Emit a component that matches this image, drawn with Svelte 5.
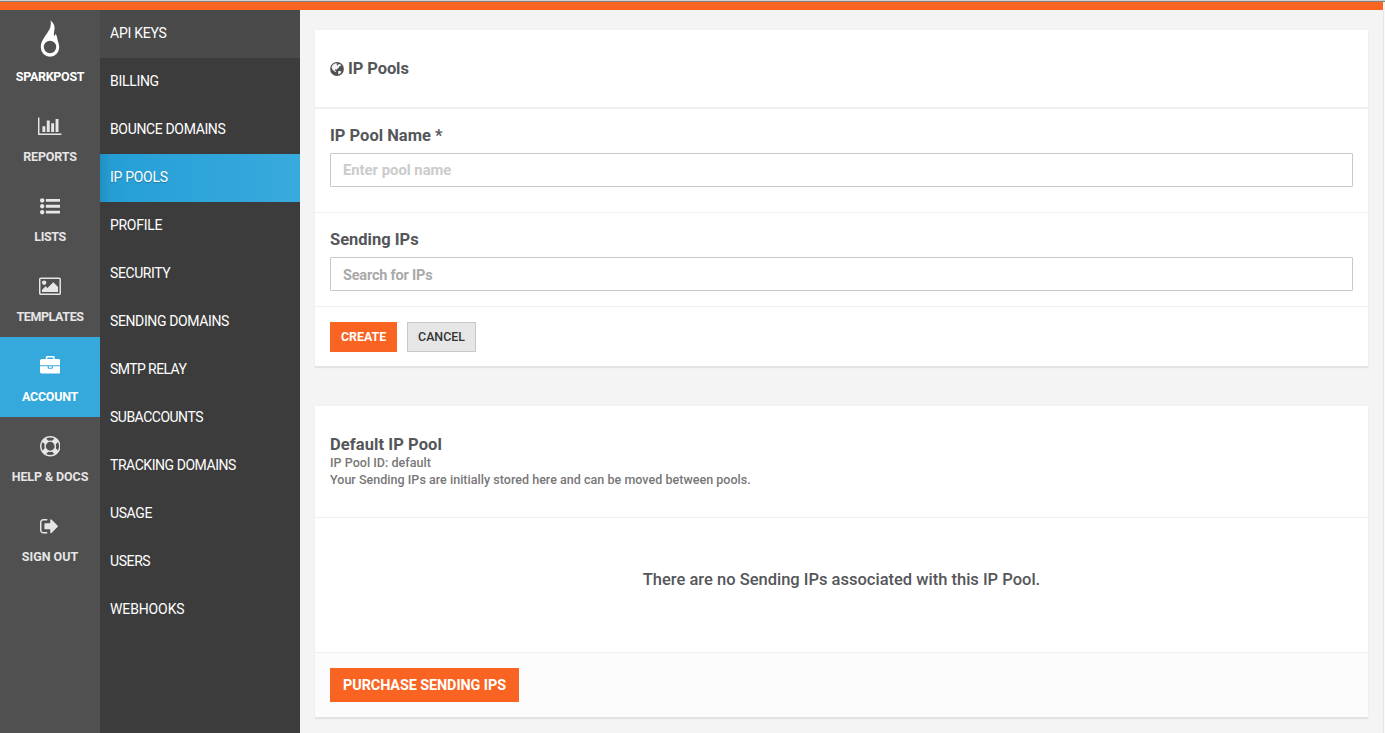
<script>
  const main = [
    { label: 'SPARKPOST', icon: 'flame', ls: -0.3 },
    { label: 'REPORTS', icon: 'chart', ls: -0.15 },
    { label: 'LISTS', icon: 'list', ls: -0.4 },
    { label: 'TEMPLATES', icon: 'image', ls: -0.4 },
    { label: 'ACCOUNT', icon: 'briefcase', ls: -0.25, active: true },
    { label: 'HELP & DOCS', icon: 'ring', ls: -0.1 },
    { label: 'SIGN OUT', icon: 'signout', ls: 0 }
  ];

  const sub = [
    { label: 'API KEYS', ls: -0.25, state: 'hover' },
    { label: 'BILLING', ls: -0.3 },
    { label: 'BOUNCE DOMAINS', ls: -0.35 },
    { label: 'IP POOLS', ls: -0.3, state: 'active' },
    { label: 'PROFILE', ls: -0.3 },
    { label: 'SECURITY', ls: -0.4 },
    { label: 'SENDING DOMAINS', ls: -0.38 },
    { label: 'SMTP RELAY', ls: -0.58 },
    { label: 'SUBACCOUNTS', ls: -0.5 },
    { label: 'TRACKING DOMAINS', ls: -0.45 },
    { label: 'USAGE', ls: -0.4 },
    { label: 'USERS', ls: -0.4 },
    { label: 'WEBHOOKS', ls: -0.12 }
  ];

  const icons = {
    chart: { x: 0, w: 2048, d: 'M640 896v512h-256v-512h256zm384-512v1024h-256v-1024h256zm1024 1152v128h-2048v-1536h128v1408h1920zm-640-896v768h-256v-768h256zm384-384v1152h-256v-1152h256z' },
    list: { x: 0, w: 1792, d: 'M384 1408q0 80-56 136t-136 56-136-56-56-136 56-136 136-56 136 56 56 136zm0-512q0 80-56 136t-136 56-136-56-56-136 56-136 136-56 136 56 56 136zm1408 416v192q0 13-9.500 22.500t-22.500 9.500h-1216q-13 0-22.500-9.500t-9.500-22.500v-192q0-13 9.500-22.500t22.500-9.500h1216q13 0 22.500 9.500t9.500 22.500zm-1408-928q0 80-56 136t-136 56-136-56-56-136 56-136 136-56 136 56 56 136zm1408 416v192q0 13-9.500 22.500t-22.500 9.500h-1216q-13 0-22.500-9.500t-9.500-22.500v-192q0-13 9.500-22.500t22.500-9.500h1216q13 0 22.500 9.500t9.500 22.500zm0-512v192q0 13-9.500 22.500t-22.500 9.500h-1216q-13 0-22.500-9.500t-9.500-22.500v-192q0-13 9.500-22.500t22.500-9.500h1216q13 0 22.500 9.500t9.500 22.500z' },
    image: { x: -64, w: 1920, d: 'M576 576q0 80-56 136t-136 56-136-56-56-136 56-136 136-56 136 56 56 136zm1024 384v448h-1408v-192l320-320 160 160 512-512zm96-704h-1600q-13 0-22.500 9.500t-9.500 22.500v1216q0 13 9.500 22.500t22.500 9.500h1600q13 0 22.500-9.500t9.500-22.500v-1216q0-13-9.500-22.500t-22.500-9.500zm160 32v1216q0 66-47 113t-113 47h-1600q-66 0-113-47t-47-113v-1216q0-66 47-113t113-47h1600q66 0 113 47t47 113z' },
    briefcase: { x: 0, w: 1792, d: 'M640 256h512v-128h-512v128zm1152 640v480q0 66-47 113t-113 47h-1472q-66 0-113-47t-47-113v-480h672v160q0 26 19 45t45 19h320q26 0 45-19t19-45v-160h672zm-768 0v128h-256v-128h256zm768-480v384h-1792v-384q0-66 47-113t113-47h352v-160q0-40 28-68t68-28h576q40 0 68 28t28 68v160h352q66 0 113 47t47 113z' },
    ring: { x: 0, w: 1792, d: 'M896 0q182 0 348 71t286 191 191 286 71 348-71 348-191 286-286 191-348 71-348-71-286-191-191-286-71-348 71-348 191-286 286-191 348-71zm0 128q-190 0-361 90l194 194q82-28 167-28t167 28l194-194q-171-90-361-90zm-678 1129l194-194q-28-82-28-167t28-167l-194-194q-90 171-90 361t90 361zm678 407q190 0 361-90l-194-194q-82 28-167 28t-167-28l-194 194q171 90 361 90zm0-384q159 0 271.500-112.500t112.500-271.500-112.500-271.500-271.500-112.500-271.500 112.500-112.500 271.500 112.500 271.500 271.500 112.500zm484-217l194 194q90-171 90-361t-90-361l-194 194q28 82 28 167t-28 167z' },
    signout: { x: 64, w: 1664, d: 'M704 1440q0 4 1 20t.5 26.500-3 23.500-10 19.500-20.500 6.500h-320q-119 0-203.500-84.500t-84.500-203.500v-704q0-119 84.500-203.500t203.500-84.500h320q13 0 22.500 9.500t9.500 22.500q0 4 1 20t.5 26.500-3 23.500-10 19.500-20.500 6.500h-320q-66 0-113 47t-47 113v704q0 66 47 113t113 47h312l11.500 1 11.500 3 8 5.500 7 9 2 13.500zm928-544q0 26-19 45l-544 544q-19 19-45 19t-45-19-19-45v-288h-448q-26 0-45-19t-19-45v-384q0-26 19-45t45-19h448v-288q0-26 19-45t45-19 45 19l544 544q19 19 19 45z' }
  };
</script>

<div class="page">
  <div class="topline"></div>
  <div class="brandbar"></div>
  <div class="body">
    <nav class="main">
      {#each main as item}
        <a class="item" class:active={item.active} class:brand={item.icon === 'flame'}>
          {#if item.icon === 'flame'}
            <svg class="flame" width="20" height="38" viewBox="0 0 20 38">
              <path fill-rule="evenodd" d="M10.600.6C14.400 3.600 15.200 7.400 14.200 11.200C13.700 13.200 13.700 14.600 14.200 16.200C15 15.600 15.400 14.800 15.500 13.800C16.800 15.500 17.200 17.500 17.600 20C18.200 22.600 19.200 24.200 19.200 27.200A9.200 9.500 0 1 1 .8 27.200C.8 23.500 2 21.200 3.600 18.600C5 16.200 6 14.600 7.700 12.200C10.400 8.600 11.400 5.500 10.600.6ZM10 20.800A6.200 6.200 0 1 0 10 33.200A6.200 6.200 0 1 0 10 20.800Z" />
            </svg>
          {:else}
            <svg height="20.500" width={(icons[item.icon].w * 20.5) / 1792} viewBox="{icons[item.icon].x} 0 {icons[item.icon].w} 1792">
              <path d={icons[item.icon].d} />
            </svg>
          {/if}
          <span style:letter-spacing="{item.ls}px">{item.label}</span>
        </a>
      {/each}
    </nav>
    <nav class="sub">
      {#each sub as item}
        <a class={item.state}><span style:letter-spacing="{item.ls}px">{item.label}</span></a>
      {/each}
    </nav>
    <main>
      <section class="card">
        <header class="title">
          <svg class="globe" width="14" height="14" viewBox="0 0 14 14">
            <circle cx="7" cy="7" r="6.900" />
            <path class="land" d="M4.700 1.500L6.500 1.200L7.300 2.100L6.400 3.100L7.400 3.500L8.600 2.200L10 2.100L11.200 3.300L10.300 4.300L8.800 4.600L8.900 5.900L7.600 6.600L6.500 7.700L5.300 7.200L4.700 8.300L6 8.900L6.200 10.200L4.700 9.400L2.700 7.900L1.500 5.400L2.600 3ZM8.200 9.200L9.800 8.800L11.400 9.700L10.500 11.300L8.600 12.400L8.100 11Z" />
          </svg>
          <h3>IP Pools</h3>
        </header>
        <div class="field name">
          <label for="pool">IP Pool Name *</label>
          <input id="pool" placeholder="Enter pool name" />
        </div>
        <div class="field ips">
          <label for="ips">Sending IPs</label>
          <input id="ips" placeholder="Search for IPs" />
        </div>
        <footer class="actions">
          <button class="primary small">CREATE</button>
          <button class="plain small">CANCEL</button>
        </footer>
      </section>
      <section class="card">
        <header class="pool">
          <h3>Default IP Pool</h3>
          <p>IP Pool ID: default</p>
          <p>Your Sending IPs are initially stored here and can be moved between pools.</p>
        </header>
        <div class="empty">There are no Sending IPs associated with this IP Pool.</div>
        <footer class="purchase">
          <button class="primary large">PURCHASE SENDING IPS</button>
        </footer>
      </section>
    </main>
    <div class="edge"></div>
  </div>
</div>

<style>
  :global(body) {
    margin: 0;
    overflow: hidden;
  }
  .page {
    height: 733px;
    display: flex;
    flex-direction: column;
    overflow: hidden;
    font-family: Roboto, sans-serif;
    color: #55565a;
    background: #f4f4f4;
  }
  .topline {
    height: 1px;
    background: #d0d0d0;
    border-bottom: 1px solid #85807c;
    flex: none;
  }
  .brandbar {
    height: 8px;
    margin-right: 2px;
    background: #fa6423;
    flex: none;
  }
  .body {
    flex: 1;
    display: flex;
    min-height: 0;
  }
  .main {
    width: 100px;
    padding-top: 7px;
    box-sizing: border-box;
    background: #505050;
    flex: none;
  }
  .item {
    height: 80px;
    box-sizing: border-box;
    padding-top: 19px;
    display: flex;
    flex-direction: column;
    align-items: center;
    color: #e6e6e6;
    font-size: 12.500px;
    font-weight: 700;
  }
  .item svg {
    fill: currentColor;
    display: block;
    flex: none;
  }
  .item span {
    line-height: 16px;
    margin-top: 12.500px;
    white-space: nowrap;
  }
  .item.brand {
    padding-top: 3px;
    color: #fff;
  }
  .brand span {
    margin-top: 11px;
  }
  .active.item {
    background: #36a9dc;
    color: #fff;
  }
  .sub {
    width: 200px;
    background: #3c3c3c;
    flex: none;
  }
  .sub a {
    height: 48px;
    padding: 0 0 2px 10px;
    box-sizing: border-box;
    display: flex;
    align-items: center;
    color: #fff;
    font-size: 14px;
    font-weight: 450;
  }
  .sub a.hover {
    background: #4a4a4a;
  }
  .sub a.active {
    background: linear-gradient(90deg, #218fc2 0, #259cd2 10px, #27a0d7 25px, #38aadd 100%);
    text-shadow: 0 1px 1px rgba(0, 0, 0, 0.25);
  }
  main {
    flex: 1;
    padding: 20px 15px 0;
  }
  .card {
    background: #fff;
    box-shadow: 0 0 1px #e6e6e6, 0 2px 1px #e2e2e2;
    margin-bottom: 40px;
  }
  h3,
  label,
  p {
    margin: 0;
    white-space: nowrap;
  }
  h3,
  label {
    font-size: 16.500px;
    font-weight: 700;
    line-height: 20px;
  }
  .title {
    height: 77px;
    padding: 0 15px;
    display: flex;
    align-items: center;
    gap: 4px;
    border-bottom: 2px solid #f0f0f0;
  }
  .title h3 {
    letter-spacing: -0.1px;
  }
  .globe {
    fill: #505154;
  }
  .land {
    fill: #f4f4f4;
  }
  .field {
    padding: 17px 15px 0;
    border-bottom: 1px solid #f0f0f0;
    box-sizing: border-box;
  }
  .name {
    height: 104px;
  }
  .ips {
    height: 94px;
  }
  label {
    display: block;
  }
  input {
    display: block;
    width: 100%;
    height: 34px;
    margin-top: 7px;
    box-sizing: border-box;
    border: 1px solid #c8c8c8;
    border-radius: 1px;
    padding: 0 12px;
    font: 700 14.800px Roboto, sans-serif;
    outline: none;
  }
  .name input::placeholder {
    color: #cbcbcb;
  }
  .ips input {
    font-size: 14.500px;
    letter-spacing: -0.2px;
    padding-top: 2px;
  }
  .ips input::placeholder {
    color: #a9a9a9;
  }
  .actions {
    height: 59px;
    padding: 15px 15px 0;
    box-sizing: border-box;
    display: flex;
    gap: 10px;
  }
  button {
    border: 0;
    padding: 0;
    font-family: Roboto, sans-serif;
    white-space: nowrap;
  }
  .primary {
    background: #fa6423;
    color: #fff;
    font-weight: 700;
  }
  .small {
    width: 67px;
    height: 30px;
    padding-bottom: 2px;
    font-size: 12.400px;
  }
  .plain {
    width: 69px;
    background: #e6e6e6;
    border: 1px solid #c8c8c8;
    color: #333;
    font-weight: 500;
  }
  .pool {
    height: 112px;
    padding: 29px 15px 0;
    box-sizing: border-box;
    border-bottom: 1px solid #f0f0f0;
  }
  .pool h3 {
    line-height: 19px;
    letter-spacing: 0.080px;
  }
  .pool p {
    font-size: 12.500px;
    line-height: 17px;
    font-weight: 500;
    letter-spacing: 0.030px;
    color: #777;
  }
  .empty {
    height: 135px;
    padding-bottom: 11px;
    box-sizing: border-box;
    display: flex;
    align-items: center;
    justify-content: center;
    font-size: 16.500px;
    font-weight: 500;
    border-bottom: 1px solid #f0f0f0;
  }
  .purchase {
    height: 64px;
    padding: 15px 15px 0;
    box-sizing: border-box;
    background: #fcfcfc;
  }
  .large {
    width: 189px;
    height: 34px;
    font-size: 14.400px;
    letter-spacing: -0.080px;
  }
  .edge {
    width: 1px;
    border-left: 1px solid #e6e6e6;
    background: #fafafa;
    flex: none;
  }
</style>
